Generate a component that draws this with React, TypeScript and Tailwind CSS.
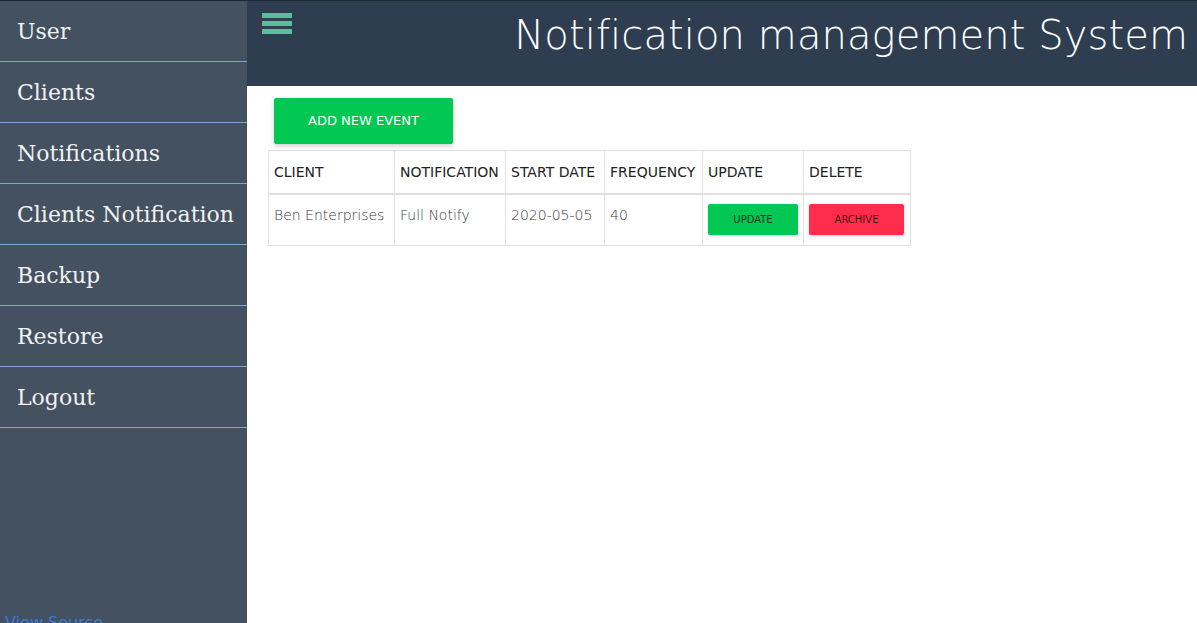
import { useState } from "react";

const menu = ["User", "Clients", "Notifications", "Clients Notification", "Backup", "Restore", "Logout"];

const rows = [{ client: "Ben Enterprises", notification: "Full Notify", start: "2020-05-05", frequency: "40" }];

const Sidebar = () => (
  <aside className="relative flex w-[247px] shrink-0 flex-col border-t border-[#1d2733] bg-[#435161]">
    {menu.map((m) => (
      <a
        key={m}
        href="#"
        className="flex h-[61px] items-center border-b border-[#7fa3d6] pl-[17px] font-['DejaVu_Serif',serif] text-[22px] text-[#f2f2f2]"
      >
        {m}
      </a>
    ))}
    <a href="#" className="absolute left-[5px] top-[610px] font-['DejaVu_Sans',sans-serif] text-[16px] text-[#3a7bd5]">
      View Source
    </a>
  </aside>
);

const Header = () => (
  <header className="flex h-[86px] items-start justify-between border-t border-[#1d2733] bg-[#2e3d50] pr-[9px]">
    <button className="ml-[15px] mt-[12px] flex w-[30px] flex-col gap-[3px]">
      <span className="h-[5px] w-full bg-[#5cbc9d]" />
      <span className="h-[5px] w-full bg-[#5cbc9d]" />
      <span className="h-[5px] w-full bg-[#5cbc9d]" />
    </button>
    <h1 className="mt-[4px] font-['DejaVu_Sans',sans-serif] text-[40px] font-extralight tracking-[0.1px] text-white">
      Notification management System
    </h1>
  </header>
);

export default function App() {
  const [data] = useState(rows);
  return (
    <div className="flex h-[623px] w-[1197px] overflow-hidden bg-white font-['DejaVu_Sans',sans-serif]">
      <Sidebar />
      <main className="flex flex-1 flex-col">
        <Header />
        <div className="px-[21px] pt-[12px]">
          <button className="ml-[6px] h-[46px] w-[179px] rounded-[2px] bg-[#00c853] text-[13px] uppercase text-white shadow-[0_2px_5px_rgba(0,0,0,0.2)]">
            Add new event
          </button>
          <table className="mt-[6px] border-collapse text-[14px]">
            <thead>
              <tr className="h-[43px] border-b-2 border-[#e0e0e0] text-left text-[#222]">
                {["CLIENT", "NOTIFICATION", "START DATE", "FREQUENCY", "UPDATE", "DELETE"].map((h, i) => (
                  <th
                    key={h}
                    className={`border border-[#e0e0e0] px-[5px] pt-[2px] font-normal ${
                      ["w-[126px]", "w-[111px]", "w-[99px]", "w-[98px]", "w-[101px]", "w-[107px]"][i]
                    }`}
                  >
                    {h}
                  </th>
                ))}
              </tr>
            </thead>
            <tbody>
              {data.map((r) => (
                <tr key={r.client} className="h-[52px] font-extralight text-[#3a3a3a]">
                  <td className="border border-[#e0e0e0] px-[5px] pb-[9px] align-middle">{r.client}</td>
                  <td className="border border-[#e0e0e0] px-[5px] pb-[9px]">{r.notification}</td>
                  <td className="border border-[#e0e0e0] px-[5px] pb-[9px]">{r.start}</td>
                  <td className="border border-[#e0e0e0] px-[5px] pb-[9px]">{r.frequency}</td>
                  <td className="border border-[#e0e0e0] px-[5px]">
                    <button className="h-[31px] w-[90px] rounded-[2px] bg-[#00c853] text-[10px] font-normal text-[#1a3a22] shadow-[0_1px_3px_rgba(0,0,0,0.2)]">
                      UPDATE
                    </button>
                  </td>
                  <td className="border border-[#e0e0e0] px-[5px]">
                    <button className="h-[31px] w-[95px] rounded-[2px] bg-[#ff2d4b] text-[10px] font-normal text-[#4a1018] shadow-[0_1px_3px_rgba(0,0,0,0.2)]">
                      ARCHIVE
                    </button>
                  </td>
                </tr>
              ))}
            </tbody>
          </table>
        </div>
      </main>
    </div>
  );
}
